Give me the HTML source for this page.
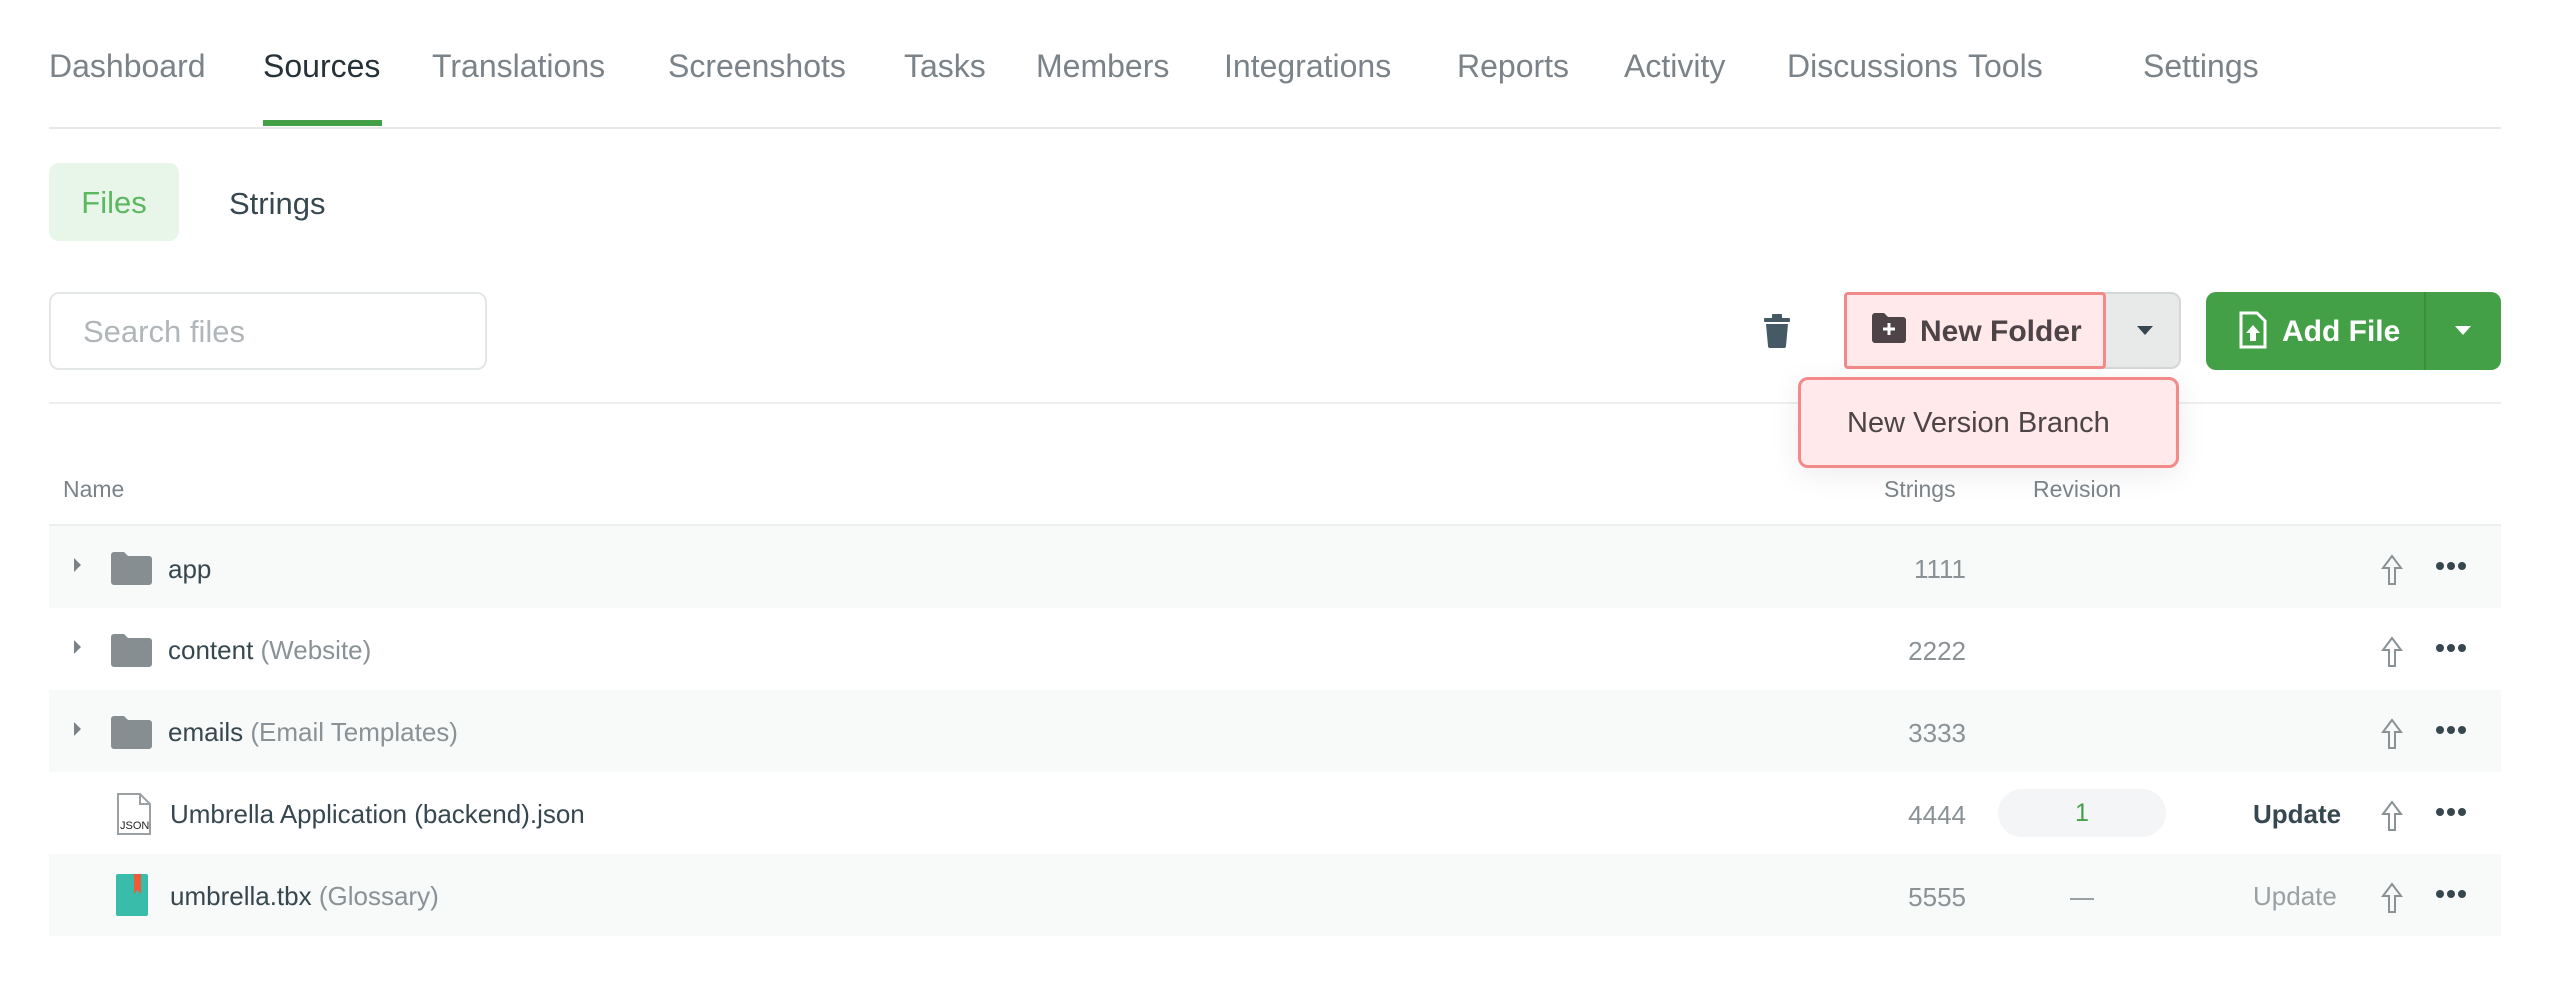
<!DOCTYPE html>
<html><head><meta charset="utf-8"><style>
*{box-sizing:border-box;margin:0;padding:0}
body{width:2550px;height:985px;background:#fff;font-family:"Liberation Sans",sans-serif;color:#263238;position:relative;overflow:hidden}
.a{position:absolute;white-space:nowrap}
.nav{font-size:32px;color:#7b8388;top:48px}
.row{position:absolute;left:49px;width:2452px;height:82px}
.g{background:#f8f9f9}
.t{font-size:26px;color:#37474f}
.m{color:#8a9296}
.num{font-size:26px;color:#8a9296;text-align:right;width:100px}
</style></head><body>
<div class="a nav" style="left:49px">Dashboard</div>
<div class="a nav" style="left:263px;color:#263238">Sources</div>
<div class="a nav" style="left:432px">Translations</div>
<div class="a nav" style="left:668px">Screenshots</div>
<div class="a nav" style="left:904px">Tasks</div>
<div class="a nav" style="left:1036px">Members</div>
<div class="a nav" style="left:1224px">Integrations</div>
<div class="a nav" style="left:1457px">Reports</div>
<div class="a nav" style="left:1624px">Activity</div>
<div class="a nav" style="left:1787px">Discussions</div>
<div class="a nav" style="left:1968px">Tools</div>
<div class="a nav" style="left:2143px">Settings</div>
<div class="a" style="left:49px;top:127px;width:2452px;height:2px;background:#e6e8e9"></div>
<div class="a" style="left:263px;top:120px;width:119px;height:6px;background:#43a047"></div>

<div class="a" style="left:49px;top:163px;width:130px;height:78px;background:#e8f5e9;border-radius:10px;color:#5cb860;font-size:31px;line-height:80px;text-align:center">Files</div>
<div class="a" style="left:229px;top:165px;line-height:78px;font-size:31px;color:#37474f">Strings</div>

<div class="a" style="left:49px;top:292px;width:438px;height:78px;border:2px solid #e4e7e8;border-radius:10px;font-size:31px;color:#b0b6b9;line-height:76px;padding-left:32px">Search files</div>

<svg class="a" style="left:1764px;top:314px" width="26" height="34" viewBox="0 0 26 34"><rect x="0" y="4" width="26" height="4" rx="1" fill="#455a64"/><rect x="8" y="0" width="10" height="5" rx="1" fill="#455a64"/><path d="M2 10h22l-2 22a2 2 0 0 1-2 2H6a2 2 0 0 1-2-2z" fill="#455a64"/></svg>

<div class="a" style="left:2080px;top:292px;width:101px;height:77px;background:#e8eaea;border:2px solid #d5d8d9;border-radius:0 10px 10px 0"></div>
<div class="a" style="left:2137px;top:326px;width:0;height:0;border-left:8px solid transparent;border-right:8px solid transparent;border-top:9px solid #37474f"></div>
<div class="a" style="left:1844px;top:292px;width:262px;height:77px;background:#ffe9ea;border:3px solid #f38a8a;border-radius:4px"></div>
<svg class="a" style="left:1872px;top:313px" width="34" height="30" viewBox="0 0 34 30"><path d="M0 3a3 3 0 0 1 3-3h9l4 4h15a3 3 0 0 1 3 3v20a3 3 0 0 1-3 3H3a3 3 0 0 1-3-3z" fill="#4e4448"/><path d="M17 10v12M11 16h12" stroke="#fff" stroke-width="3"/></svg>
<div class="a" style="left:1920px;top:315px;font-size:30px;color:#4e4448;font-weight:bold">New Folder</div>

<div class="a" style="left:2206px;top:292px;width:295px;height:78px;background:#43a047;border-radius:10px"></div>
<div class="a" style="left:2424px;top:292px;width:2px;height:78px;background:#3b8e3f"></div>
<div class="a" style="left:2455px;top:326px;width:0;height:0;border-left:8px solid transparent;border-right:8px solid transparent;border-top:9px solid #fff"></div>
<svg class="a" style="left:2239px;top:311px" width="28" height="38" viewBox="0 0 28 38"><path d="M2 2h16l8 8v26H2z" fill="none" stroke="#fff" stroke-width="3"/><path d="M14 14l-7 8h4v8h6v-8h4z" fill="#fff"/></svg>
<div class="a" style="left:2282px;top:315px;font-size:30px;color:#fff;font-weight:bold">Add File</div>

<div class="a" style="left:49px;top:402px;width:2452px;height:2px;background:#eceeef"></div>

<div class="a" style="left:1798px;top:377px;width:381px;height:91px;background:#ffe9ea;border:3px solid #f38a8a;border-radius:10px;box-shadow:0 6px 30px rgba(0,0,0,.08);font-size:29px;color:#4e4448;line-height:87px;padding-left:46px">New Version Branch</div>

<div class="a" style="left:63px;top:476px;font-size:23px;color:#7b8388">Name</div>
<div class="a" style="left:1884px;top:476px;font-size:23px;color:#7b8388">Strings</div>
<div class="a" style="left:2033px;top:476px;font-size:23px;color:#7b8388">Revision</div>
<div class="a" style="left:49px;top:524px;width:2452px;height:2px;background:#eceeef"></div>

<div class="row g" style="top:526px"></div>
<div class="row" style="top:608px"></div>
<div class="row g" style="top:690px"></div>
<div class="row" style="top:772px"></div>
<div class="row g" style="top:854px"></div>

<svg width="0" height="0" style="position:absolute"><defs><symbol id="f" viewBox="0 0 41 33"><path d="M0 3a3 3 0 0 1 3-3h10l4 4h21a3 3 0 0 1 3 3v23a3 3 0 0 1-3 3H3a3 3 0 0 1-3-3z" fill="#868e92"/></symbol><symbol id="u" viewBox="0 0 22 32"><path d="M11 2L2 14h6v16h6V14h6z" fill="none" stroke="#8a9296" stroke-width="2"/></symbol></defs></svg>

<div class="a" style="left:74px;top:558px;border-top:7px solid transparent;border-bottom:7px solid transparent;border-left:7px solid #7b8388"></div>
<svg class="a" style="left:111px;top:552px" width="41" height="33"><use href="#f"/></svg>
<div class="a t" style="left:168px;top:554px">app</div>

<div class="a" style="left:74px;top:640px;border-top:7px solid transparent;border-bottom:7px solid transparent;border-left:7px solid #7b8388"></div>
<svg class="a" style="left:111px;top:634px" width="41" height="33"><use href="#f"/></svg>
<div class="a t" style="left:168px;top:635px">content <span class="m">(Website)</span></div>

<div class="a" style="left:74px;top:722px;border-top:7px solid transparent;border-bottom:7px solid transparent;border-left:7px solid #7b8388"></div>
<svg class="a" style="left:111px;top:716px" width="41" height="33"><use href="#f"/></svg>
<div class="a t" style="left:168px;top:717px">emails <span class="m">(Email Templates)</span></div>

<svg class="a" style="left:116px;top:792px" width="40" height="44" viewBox="0 0 40 44"><path d="M2 2h22l10 10v30H2z" fill="#fff" stroke="#9aa0a3" stroke-width="2"/><path d="M24 2v10h10" fill="none" stroke="#9aa0a3" stroke-width="2"/><text x="4" y="37" font-family="Liberation Sans" font-size="11" fill="#222">JSON</text></svg>
<div class="a t" style="left:170px;top:799px">Umbrella Application (backend).json</div>

<svg class="a" style="left:116px;top:874px" width="32" height="42" viewBox="0 0 32 42"><rect width="32" height="42" rx="2" fill="#3abcab"/><path d="M18 0h7v20l-3.5-4-3.5 4z" fill="#f05a37"/></svg>
<div class="a t" style="left:170px;top:881px">umbrella.tbx <span class="m">(Glossary)</span></div>

<div class="a num" style="left:1866px;top:554px">1111</div>
<div class="a num" style="left:1866px;top:636px">2222</div>
<div class="a num" style="left:1866px;top:718px">3333</div>
<div class="a num" style="left:1866px;top:800px">4444</div>
<div class="a num" style="left:1866px;top:882px">5555</div>

<div class="a" style="left:1998px;top:789px;width:168px;height:48px;border-radius:24px;background:#f3f5f6;color:#43a047;font-size:25px;text-align:center;line-height:48px">1</div>
<div class="a" style="left:2070px;top:898px;width:24px;height:2px;background:#9aa0a3"></div>

<div class="a" style="left:2253px;top:799px;font-size:26px;font-weight:bold;color:#37474f">Update</div>
<div class="a" style="left:2253px;top:881px;font-size:26px;color:#9aa0a3">Update</div>

<svg class="a" style="left:2381px;top:554px" width="22" height="32"><use href="#u"/></svg>
<svg class="a" style="left:2381px;top:636px" width="22" height="32"><use href="#u"/></svg>
<svg class="a" style="left:2381px;top:718px" width="22" height="32"><use href="#u"/></svg>
<svg class="a" style="left:2381px;top:800px" width="22" height="32"><use href="#u"/></svg>
<svg class="a" style="left:2381px;top:882px" width="22" height="32"><use href="#u"/></svg>

<svg class="a" style="left:2436px;top:561px" width="30" height="10"><circle cx="4" cy="5" r="4" fill="#37474f"/><circle cx="15" cy="5" r="4" fill="#37474f"/><circle cx="26" cy="5" r="4" fill="#37474f"/></svg>
<svg class="a" style="left:2436px;top:643px" width="30" height="10"><circle cx="4" cy="5" r="4" fill="#37474f"/><circle cx="15" cy="5" r="4" fill="#37474f"/><circle cx="26" cy="5" r="4" fill="#37474f"/></svg>
<svg class="a" style="left:2436px;top:725px" width="30" height="10"><circle cx="4" cy="5" r="4" fill="#37474f"/><circle cx="15" cy="5" r="4" fill="#37474f"/><circle cx="26" cy="5" r="4" fill="#37474f"/></svg>
<svg class="a" style="left:2436px;top:807px" width="30" height="10"><circle cx="4" cy="5" r="4" fill="#37474f"/><circle cx="15" cy="5" r="4" fill="#37474f"/><circle cx="26" cy="5" r="4" fill="#37474f"/></svg>
<svg class="a" style="left:2436px;top:889px" width="30" height="10"><circle cx="4" cy="5" r="4" fill="#37474f"/><circle cx="15" cy="5" r="4" fill="#37474f"/><circle cx="26" cy="5" r="4" fill="#37474f"/></svg>
</body></html>
